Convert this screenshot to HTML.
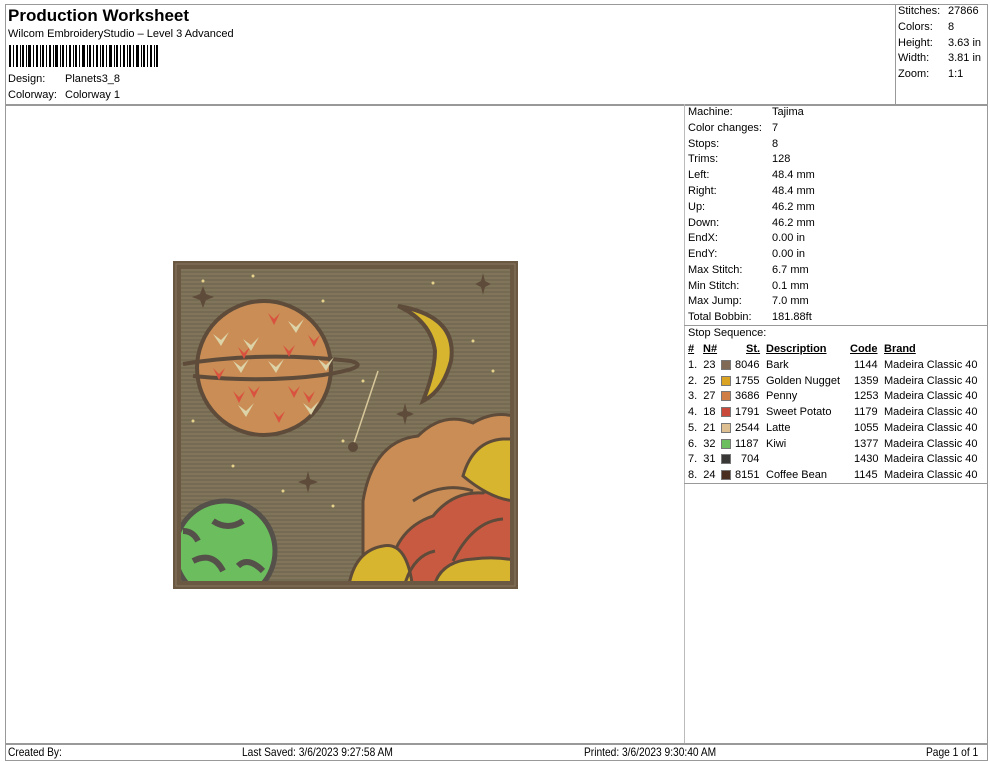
<!DOCTYPE html>
<html><head><meta charset="utf-8"><style>
*{margin:0;padding:0;box-sizing:border-box}
body{width:990px;height:762px;background:#fff;font-family:"Liberation Sans",Arial,sans-serif;color:#000;position:relative;overflow:hidden;font-size:11px}
.a{position:absolute;white-space:nowrap;line-height:13px}
.r .a{margin-top:1px}
.r .sw{margin-top:1px}
.l{position:absolute;background:#999}
.u{text-decoration:underline;font-weight:bold}
.sw{position:absolute;width:10px;height:10px;border:1px solid #777}
.ft{position:absolute;top:745px;font-size:12px;transform:scaleX(.85);transform-origin:left top;white-space:nowrap}
</style></head><body>
<div class="l" style="left:5px;top:4px;width:983px;height:1px"></div>
<div class="l" style="left:5px;top:4px;width:1px;height:757px"></div>
<div class="l" style="left:987px;top:4px;width:1px;height:757px"></div>
<div class="l" style="left:5px;top:104px;width:983px;height:2px"></div>
<div class="l" style="left:895px;top:4px;width:1px;height:100px"></div>
<div class="l" style="left:684px;top:104px;width:1px;height:640px;background:#bbb"></div>
<div class="l" style="left:684px;top:325px;width:304px;height:1px"></div>
<div class="l" style="left:684px;top:483px;width:304px;height:1px"></div>
<div class="l" style="left:5px;top:743px;width:983px;height:2px"></div>
<div class="l" style="left:5px;top:760px;width:983px;height:1px"></div>

<div class="a" style="left:8px;top:6px;font-size:17px;line-height:20px;font-weight:bold">Production Worksheet</div>
<div class="a" style="left:8px;top:28px">Wilcom EmbroideryStudio – Level 3 Advanced</div>
<svg style="position:absolute;left:9px;top:45px" width="150" height="22">
<g fill="#000">
<rect x="0" width="2" height="22"/><rect x="4" width="1" height="22"/><rect x="7" width="2" height="22"/><rect x="11" width="1" height="22"/><rect x="13" width="2" height="22"/><rect x="17" width="1" height="22"/><rect x="19" width="3" height="22"/><rect x="24" width="1" height="22"/><rect x="27" width="2" height="22"/><rect x="31" width="1" height="22"/><rect x="33" width="2" height="22"/><rect x="37" width="1" height="22"/><rect x="40" width="2" height="22"/><rect x="44" width="1" height="22"/><rect x="46" width="3" height="22"/><rect x="51" width="1" height="22"/><rect x="53" width="2" height="22"/><rect x="57" width="1" height="22"/><rect x="60" width="2" height="22"/><rect x="64" width="1" height="22"/><rect x="66" width="2" height="22"/><rect x="70" width="1" height="22"/><rect x="73" width="3" height="22"/><rect x="78" width="1" height="22"/><rect x="80" width="2" height="22"/><rect x="84" width="1" height="22"/><rect x="87" width="2" height="22"/><rect x="91" width="1" height="22"/><rect x="93" width="2" height="22"/><rect x="97" width="1" height="22"/><rect x="100" width="3" height="22"/><rect x="105" width="1" height="22"/><rect x="107" width="2" height="22"/><rect x="111" width="1" height="22"/><rect x="114" width="2" height="22"/><rect x="118" width="1" height="22"/><rect x="120" width="2" height="22"/><rect x="124" width="1" height="22"/><rect x="127" width="3" height="22"/><rect x="132" width="1" height="22"/><rect x="134" width="2" height="22"/><rect x="138" width="1" height="22"/><rect x="141" width="2" height="22"/><rect x="145" width="1" height="22"/><rect x="147" width="2" height="22"/>
</g></svg>
<div class="a" style="left:8px;top:73px">Design:</div><div class="a" style="left:65px;top:73px">Planets3_8</div>
<div class="a" style="left:8px;top:89px">Colorway:</div><div class="a" style="left:65px;top:89px">Colorway 1</div>

<div class="a" style="left:898px;top:5px">Stitches:</div><div class="a" style="left:948px;top:5px">27866</div>
<div class="a" style="left:898px;top:21px">Colors:</div><div class="a" style="left:948px;top:21px">8</div>
<div class="a" style="left:898px;top:37px">Height:</div><div class="a" style="left:948px;top:37px">3.63 in</div>
<div class="a" style="left:898px;top:52px">Width:</div><div class="a" style="left:948px;top:52px">3.81 in</div>
<div class="a" style="left:898px;top:68px">Zoom:</div><div class="a" style="left:948px;top:68px">1:1</div>

<div class="r">
<div class="a" style="left:688px;top:105px">Machine:</div><div class="a" style="left:772px;top:105px">Tajima</div>
<div class="a" style="left:688px;top:121px">Color changes:</div><div class="a" style="left:772px;top:121px">7</div>
<div class="a" style="left:688px;top:137px">Stops:</div><div class="a" style="left:772px;top:137px">8</div>
<div class="a" style="left:688px;top:152px">Trims:</div><div class="a" style="left:772px;top:152px">128</div>
<div class="a" style="left:688px;top:168px">Left:</div><div class="a" style="left:772px;top:168px">48.4 mm</div>
<div class="a" style="left:688px;top:184px">Right:</div><div class="a" style="left:772px;top:184px">48.4 mm</div>
<div class="a" style="left:688px;top:200px">Up:</div><div class="a" style="left:772px;top:200px">46.2 mm</div>
<div class="a" style="left:688px;top:216px">Down:</div><div class="a" style="left:772px;top:216px">46.2 mm</div>
<div class="a" style="left:688px;top:231px">EndX:</div><div class="a" style="left:772px;top:231px">0.00 in</div>
<div class="a" style="left:688px;top:247px">EndY:</div><div class="a" style="left:772px;top:247px">0.00 in</div>
<div class="a" style="left:688px;top:263px">Max Stitch:</div><div class="a" style="left:772px;top:263px">6.7 mm</div>
<div class="a" style="left:688px;top:279px">Min Stitch:</div><div class="a" style="left:772px;top:279px">0.1 mm</div>
<div class="a" style="left:688px;top:294px">Max Jump:</div><div class="a" style="left:772px;top:294px">7.0 mm</div>
<div class="a" style="left:688px;top:310px">Total Bobbin:</div><div class="a" style="left:772px;top:310px">181.88ft</div>
<div class="a" style="left:688px;top:326px">Stop Sequence:</div>

<div class="a u" style="left:688px;top:342px">#</div>
<div class="a u" style="left:703px;top:342px">N#</div>
<div class="a u" style="left:746px;top:342px">St.</div>
<div class="a u" style="left:766px;top:342px">Description</div>
<div class="a u" style="left:850px;top:342px">Code</div>
<div class="a u" style="left:884px;top:342px">Brand</div>

<div class="a" style="left:688px;top:358px">1.&nbsp; 23</div><div class="sw" style="left:721px;top:359px;background:#806a55"></div><div class="a" style="left:735px;top:358px">8046</div><div class="a" style="left:766px;top:358px">Bark</div><div class="a" style="left:854px;top:358px">1144</div><div class="a" style="left:884px;top:358px">Madeira Classic 40</div>
<div class="a" style="left:688px;top:374px">2.&nbsp; 25</div><div class="sw" style="left:721px;top:375px;background:#dba322"></div><div class="a" style="left:735px;top:374px">1755</div><div class="a" style="left:766px;top:374px">Golden Nugget</div><div class="a" style="left:854px;top:374px">1359</div><div class="a" style="left:884px;top:374px">Madeira Classic 40</div>
<div class="a" style="left:688px;top:389px">3.&nbsp; 27</div><div class="sw" style="left:721px;top:390px;background:#cf7f45"></div><div class="a" style="left:735px;top:389px">3686</div><div class="a" style="left:766px;top:389px">Penny</div><div class="a" style="left:854px;top:389px">1253</div><div class="a" style="left:884px;top:389px">Madeira Classic 40</div>
<div class="a" style="left:688px;top:405px">4.&nbsp; 18</div><div class="sw" style="left:721px;top:406px;background:#c94a3a"></div><div class="a" style="left:735px;top:405px">1791</div><div class="a" style="left:766px;top:405px">Sweet Potato</div><div class="a" style="left:854px;top:405px">1179</div><div class="a" style="left:884px;top:405px">Madeira Classic 40</div>
<div class="a" style="left:688px;top:421px">5.&nbsp; 21</div><div class="sw" style="left:721px;top:422px;background:#ddbf92"></div><div class="a" style="left:735px;top:421px">2544</div><div class="a" style="left:766px;top:421px">Latte</div><div class="a" style="left:854px;top:421px">1055</div><div class="a" style="left:884px;top:421px">Madeira Classic 40</div>
<div class="a" style="left:688px;top:437px">6.&nbsp; 32</div><div class="sw" style="left:721px;top:438px;background:#6bbd5e"></div><div class="a" style="left:735px;top:437px">1187</div><div class="a" style="left:766px;top:437px">Kiwi</div><div class="a" style="left:854px;top:437px">1377</div><div class="a" style="left:884px;top:437px">Madeira Classic 40</div>
<div class="a" style="left:688px;top:452px">7.&nbsp; 31</div><div class="sw" style="left:721px;top:453px;background:#3a3836"></div><div class="a" style="left:741px;top:452px">704</div><div class="a" style="left:854px;top:452px">1430</div><div class="a" style="left:884px;top:452px">Madeira Classic 40</div>
<div class="a" style="left:688px;top:468px">8.&nbsp; 24</div><div class="sw" style="left:721px;top:469px;background:#4a2f20"></div><div class="a" style="left:735px;top:468px">8151</div><div class="a" style="left:766px;top:468px">Coffee Bean</div><div class="a" style="left:854px;top:468px">1145</div><div class="a" style="left:884px;top:468px">Madeira Classic 40</div>
</div>

<svg style="position:absolute;left:173px;top:261px" width="345" height="328" viewBox="0 0 345 328">
<defs>
<pattern id="st" width="6" height="4" patternUnits="userSpaceOnUse"><rect width="6" height="4" fill="#80755b"/><rect y="2.5" width="6" height="1" fill="#6a614b"/></pattern>
<clipPath id="c"><rect x="8" y="8" width="329" height="312"/></clipPath>
</defs>
<rect width="345" height="328" fill="#6b5843"/>
<rect x="3" y="3" width="339" height="322" fill="none" stroke="#8a7660" stroke-width="1"/>
<rect x="8" y="8" width="329" height="312" fill="url(#st)"/>
<g clip-path="url(#c)">
<circle cx="91" cy="107" r="67" fill="#c98d55" stroke="#5e4b3a" stroke-width="4"/>
<path d="M10 103 Q90 90 178 100 Q200 106 150 114 Q90 122 20 115" fill="none" stroke="#5e4b3a" stroke-width="4"/>
<g fill="#d9523f"><path d="M95 52 l6 6 6-6 -6 12z"/><path d="M65 86 l6 6 6-6 -6 12z"/><path d="M110 84 l6 6 6-6 -6 12z"/><path d="M135 74 l6 6 6-6 -6 12z"/><path d="M60 130 l6 6 6-6 -6 12z"/><path d="M75 125 l6 6 6-6 -6 12z"/><path d="M115 125 l6 6 6-6 -6 12z"/><path d="M100 150 l6 6 6-6 -6 12z"/><path d="M130 130 l6 6 6-6 -6 12z"/><path d="M40 107 l6 6 6-6 -6 12z"/></g>
<g fill="#ddd3a8"><path d="M40 73 l8 6 8-8 -8 14z"/><path d="M70 78 l8 6 8-8 -8 14z"/><path d="M115 60 l8 6 8-8 -8 14z"/><path d="M60 100 l8 6 8-8 -8 14z"/><path d="M95 100 l8 6 8-8 -8 14z"/><path d="M145 98 l8 6 8-8 -8 14z"/><path d="M65 144 l8 6 8-8 -8 14z"/><path d="M130 142 l8 6 8-8 -8 14z"/></g>
<path d="M225 45 Q285 55 278 100 Q270 130 250 140 Q262 110 262 90 Q258 60 225 45z" fill="#d8b52e" stroke="#5e4b3a" stroke-width="4"/>
<circle cx="52" cy="290" r="50" fill="#6bbd5e" stroke="#555049" stroke-width="5"/>
<path d="M40 260 q15 10 30 0 M20 300 q20 -10 30 10 M65 305 q10 -10 25 5 M10 270 q10 0 15 10" stroke="#555049" stroke-width="6" fill="none"/>
<g stroke="#5e4b3a" stroke-width="3">
<path d="M190 240 Q200 180 245 175 Q270 150 300 162 Q320 150 340 155 L340 330 L190 330z" fill="#c98d55"/>
<path d="M215 330 Q215 270 260 255 Q280 230 310 232 Q330 220 345 225 L345 330z" fill="#c95a42"/>
<path d="M175 330 Q180 290 210 285 Q235 280 240 330z" fill="#d8b52e"/>
<path d="M260 330 Q265 300 300 298 Q325 295 345 300 L345 330z" fill="#d8b52e"/>
<path d="M290 215 Q300 180 330 178 L345 178 L345 240 Q320 240 290 215z" fill="#d8b52e"/>
<path d="M230 330 Q238 295 262 290 M280 300 Q300 260 330 258 M240 240 Q270 220 300 230" fill="none"/>
</g>
<g fill="#e6d28a"><circle cx="30" cy="20" r="1.5"/><circle cx="80" cy="15" r="1.5"/><circle cx="150" cy="40" r="1.5"/><circle cx="190" cy="120" r="1.5"/><circle cx="300" cy="80" r="1.5"/><circle cx="320" cy="110" r="1.5"/><circle cx="170" cy="180" r="1.5"/><circle cx="60" cy="205" r="1.5"/><circle cx="110" cy="230" r="1.5"/><circle cx="160" cy="245" r="1.5"/><circle cx="260" cy="22" r="1.5"/><circle cx="20" cy="160" r="1.5"/></g>
<path d="M30 25 l3 8 l8 3 l-8 3 l-3 8 l-3 -8 l-8 -3 l8 -3z M310 12 l2 8 l6 3 l-6 3 l-2 8 l-2 -8 l-6 -3 l6 -3z M135 210 l2 8 l8 3 l-8 3 l-2 8 l-2 -8 l-8 -3 l8 -3z M232 142 l2 8 l7 3 l-7 3 l-2 8 l-2 -8 l-7 -3 l7 -3z" fill="#5e4b3a"/>
<path d="M180 185 L205 110" stroke="#d8c89a" stroke-width="1.5"/>
<circle cx="180" cy="186" r="5" fill="#5e4b3a"/>
</g>
</svg>

<div class="ft" style="left:8px">Created By:</div>
<div class="ft" style="left:242px">Last Saved: 3/6/2023 9:27:58 AM</div>
<div class="ft" style="left:584px">Printed: 3/6/2023 9:30:40 AM</div>
<div class="ft" style="left:926px">Page 1 of 1</div>
</body></html>
